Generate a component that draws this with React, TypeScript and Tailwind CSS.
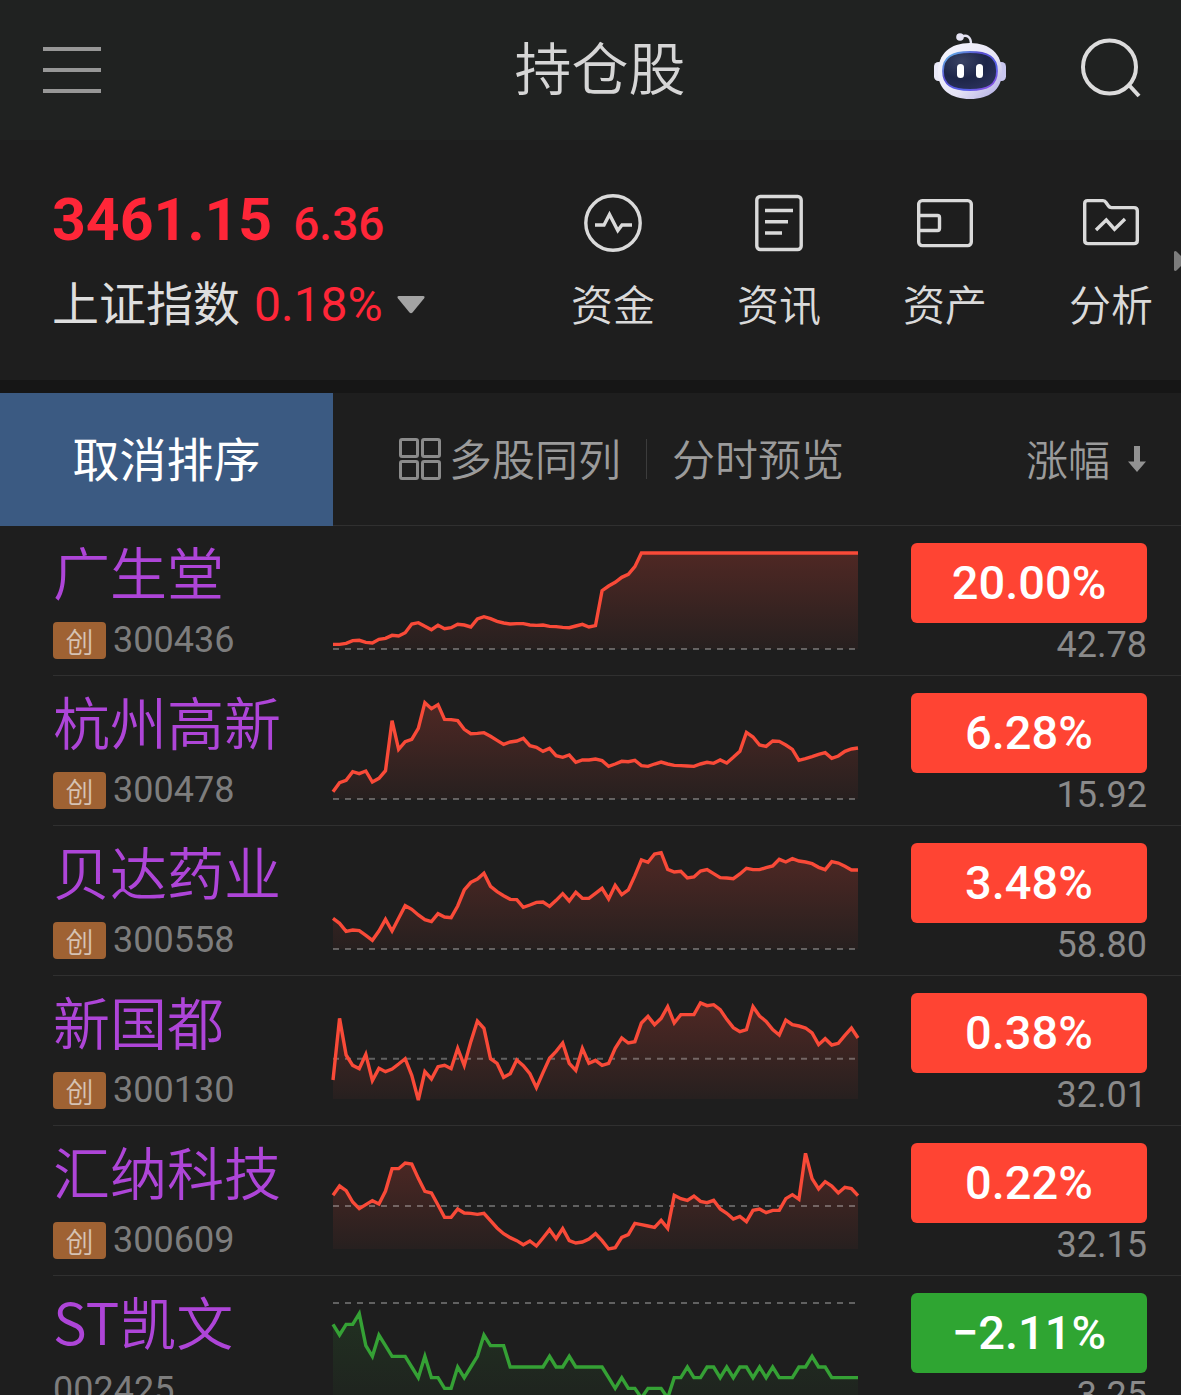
import { useId } from "react";
import type { ReactNode } from "react";

type Stock = {
  name: string;
  code: string;
  tag?: string;
  change: string;
  price: string;
  up: boolean;
  baseline: number;
  points: number[];
};

// Chart space is 1600 x 360, one sample every 20 units, y grows downwards
const CHART_WIDTH = 1600;
const CHART_HEIGHT = 360;
const CHART_FLOOR = 357;

const stocks: Stock[] = [
  {
    name: "广生堂", code: "300436", tag: "创", change: "20.00%", price: "42.78", up: true, baseline: 357,
    points: [
      343, 343, 340, 332, 331, 337, 339, 328, 325, 316, 318, 308, 282, 278, 289, 299, 286, 296, 293, 283, 285, 291, 267, 260, 266, 274, 279,
      282, 281, 281, 285, 286, 285, 289, 290, 292, 293, 288, 283, 291, 287, 182, 168, 157, 142, 133, 110, 69, 69, 69, 69, 69, 69, 69,
      69, 69, 69, 69, 69, 69, 69, 69, 69, 69, 69, 69, 69, 69, 69, 69, 69, 69, 69, 69, 69, 69, 69, 69, 69, 69, 69,
    ],
  },
  {
    name: "杭州高新", code: "300478", tag: "创", change: "6.28%", price: "15.92", up: true, baseline: 357,
    points: [
      335, 308, 301, 275, 281, 273, 306, 295, 272, 122, 208, 185, 178, 145, 68, 86, 74, 118, 119, 122, 148, 161, 160, 158, 169, 181, 193,
      186, 183, 175, 197, 202, 214, 205, 227, 232, 225, 247, 240, 240, 237, 242, 259, 252, 244, 245, 241, 257, 259, 252, 246, 252, 256, 257,
      258, 259, 252, 247, 250, 240, 249, 232, 214, 157, 171, 195, 199, 183, 184, 195, 208, 241, 236, 230, 223, 218, 235, 228, 214, 207, 204,
    ],
  },
  {
    name: "贝达药业", code: "300558", tag: "创", change: "3.48%", price: "58.80", up: true, baseline: 357,
    points: [
      265, 280, 304, 300, 302, 316, 331, 303, 268, 303, 265, 227, 238, 255, 269, 275, 251, 261, 263, 228, 180, 157, 147, 130, 169, 185, 197,
      208, 209, 232, 225, 217, 216, 229, 211, 191, 213, 187, 205, 205, 190, 175, 207, 166, 194, 180, 137, 90, 97, 72, 68, 118, 126, 124,
      144, 141, 123, 119, 131, 143, 144, 146, 132, 115, 119, 119, 113, 108, 88, 96, 86, 93, 96, 101, 112, 119, 95, 99, 109, 120, 120,
    ],
  },
  {
    name: "新国都", code: "300130", tag: "创", change: "0.38%", price: "32.01", up: true, baseline: 236,
    points: [
      300, 115, 225, 256, 266, 223, 302, 265, 275, 267, 252, 236, 286, 360, 275, 297, 260, 256, 266, 205, 256, 185, 123, 145, 236, 250, 292,
      281, 240, 257, 281, 323, 278, 235, 214, 189, 250, 271, 205, 250, 241, 256, 250, 205, 174, 189, 185, 129, 109, 134, 115, 80, 129, 104,
      104, 104, 69, 77, 74, 89, 118, 143, 155, 149, 80, 108, 124, 149, 165, 120, 134, 138, 144, 159, 194, 176, 195, 190, 166, 144, 174,
    ],
  },
  {
    name: "汇纳科技", code: "300609", tag: "创", change: "0.22%", price: "32.15", up: true, baseline: 228,
    points: [
      196, 168, 182, 216, 236, 224, 212, 222, 183, 116, 116, 99, 102, 145, 184, 189, 225, 262, 262, 237, 249, 250, 253, 250, 272, 294, 311,
      323, 332, 344, 333, 348, 324, 299, 326, 296, 332, 339, 336, 327, 311, 332, 357, 353, 322, 314, 280, 284, 288, 292, 271, 295, 196, 206,
      211, 198, 214, 218, 211, 237, 250, 267, 259, 275, 241, 237, 248, 241, 241, 206, 194, 208, 70, 146, 177, 155, 168, 189, 172, 176, 197,
    ],
  },
  {
    name: "ST凯文", code: "002425", change: "−2.11%", price: "3.25", up: false, baseline: 69,
    points: [
      133, 165, 133, 133, 101, 197, 229, 165, 197, 229, 229, 229, 261, 293, 229, 293, 293, 325, 325, 261, 293, 261, 229, 165, 197, 197, 197,
      261, 261, 261, 261, 261, 261, 229, 261, 261, 229, 261, 261, 261, 261, 261, 293, 325, 293, 325, 325, 354, 325, 325, 325, 354, 293, 293,
      261, 293, 293, 261, 261, 293, 261, 293, 261, 261, 293, 261, 293, 261, 293, 293, 293, 261, 261, 229, 261, 261, 293, 293, 293, 293, 293,
    ],
  },
];

function Sparkline({ points, baseline, up }: Pick<Stock, "points" | "baseline" | "up">) {
  const gradientId = useId();
  const color = up ? "#f94a38" : "#35a135";
  const line = points.map((y, i) => `${i * 20},${y}`).join(" ");

  return (
    <svg viewBox={`0 0 ${CHART_WIDTH} ${CHART_HEIGHT}`} preserveAspectRatio="none" className="block h-[120px] w-full overflow-visible" aria-hidden="true">
      <defs>
        <linearGradient id={gradientId} gradientUnits="userSpaceOnUse" x1="0" y1="60" x2="0" y2={CHART_FLOOR}>
          <stop offset="0" stopColor={color} stopOpacity={up ? 0.23 : 0.16} />
          <stop offset="1" stopColor={color} stopOpacity="0.04" />
        </linearGradient>
      </defs>
      <polygon points={`0,${CHART_FLOOR} ${line} ${CHART_WIDTH},${CHART_FLOOR}`} fill={`url(#${gradientId})`} />
      <line x1="0" y1={baseline} x2={CHART_WIDTH} y2={baseline} stroke="#fff" strokeOpacity="0.3" strokeWidth="2" strokeDasharray="6 6" vectorEffect="non-scaling-stroke" />
      <polyline points={line} fill="none" stroke={color} strokeWidth="3.4" vectorEffect="non-scaling-stroke" />
    </svg>
  );
}

function RobotIcon() {
  return (
    <svg width="76" height="70" viewBox="0 2 76 70" aria-hidden="true">
      <defs>
        <linearGradient id="robot-shell" x1="0" y1="0" x2="1" y2="1">
          <stop offset="0" stopColor="#f7f7fd" />
          <stop offset="0.6" stopColor="#e6e4f6" />
          <stop offset="1" stopColor="#aaa6e0" />
        </linearGradient>
        <linearGradient id="robot-rim" x1="0" y1="0" x2="1" y2="1">
          <stop offset="0" stopColor="#63c8ee" />
          <stop offset="0.35" stopColor="#5a4fd0" />
          <stop offset="0.7" stopColor="#5560ea" />
          <stop offset="1" stopColor="#a04be0" />
        </linearGradient>
        <radialGradient id="robot-face" cx="0.35" cy="0.25" r="0.9">
          <stop offset="0" stopColor="#3a4263" />
          <stop offset="0.5" stopColor="#1d2548" />
          <stop offset="1" stopColor="#2e3560" />
        </radialGradient>
      </defs>
      <path d="M29 6 C35 3 39 6 39 13" fill="none" stroke="#e4e3f2" strokeWidth="2.4" />
      <circle cx="28" cy="6" r="3.8" fill="#e6e5f5" />
      <rect x="2" y="31" width="9" height="19" rx="4.5" fill="#e9e9f8" />
      <rect x="65" y="31" width="9" height="19" rx="4.5" fill="#c9c7ef" />
      <path d="M38 12 C58 12 70 23 70 41 C70 59 57 68 38 68 C19 68 6 59 6 41 C6 23 18 12 38 12 Z" fill="url(#robot-shell)" />
      <path d="M38 21 C56 21 65 26 65 40 C65 54 56 59 38 59 C20 59 11 54 11 40 C11 26 20 21 38 21 Z" fill="url(#robot-face)" stroke="url(#robot-rim)" strokeWidth="1.8" />
      <rect x="25" y="33" width="7" height="14" rx="3.5" fill="#fff" />
      <rect x="44" y="33" width="7" height="14" rx="3.5" fill="#fff" />
    </svg>
  );
}

function ShortcutIcon({ children }: { children: ReactNode }) {
  return (
    <svg width="60" height="60" viewBox="0 0 60 60" fill="none" stroke="#dadada" strokeWidth="3.4" strokeLinejoin="round" aria-hidden="true">
      {children}
    </svg>
  );
}

const shortcuts = [
  {
    label: "资金",
    icon: (
      <>
        <circle cx="30" cy="30" r="27.2" />
        <path d="M12 32 H21 L26.5 21.5 L34.8 37.5 L39 32 H49" strokeLinejoin="miter" />
      </>
    ),
  },
  {
    label: "资讯",
    icon: (
      <>
        <rect x="7.8" y="3.5" width="44.4" height="53" rx="3.5" />
        <path d="M16 17.5 H44 M16 28.8 H39 M16 40 H33" />
      </>
    ),
  },
  {
    label: "资产",
    icon: (
      <>
        <rect x="3.7" y="7.6" width="52.6" height="45" rx="3.5" />
        <path d="M3.7 22.5 H22.5 Q24.5 22.5 24.5 24.5 V35.5 Q24.5 37.5 22.5 37.5 H3.7" />
      </>
    ),
  },
  {
    label: "分析",
    icon: (
      <>
        <path d="M6.5 7.6 H22 Q24 7.6 25 9.6 L27.5 13 Q28.5 14.6 30.5 14.6 H53 Q56.3 14.6 56.3 17.8 V47.5 Q56.3 50.6 53 50.6 H7 Q3.7 50.6 3.7 47.5 V10.5 Q3.7 7.6 6.5 7.6 Z" />
        <path d="M15 37 L25.3 27 L33.5 36.2 L44 26" strokeLinejoin="miter" />
      </>
    ),
  },
];

function TopBar() {
  return (
    <header className="grid h-[140px] grid-cols-[1fr_auto_1fr] items-center bg-[#202221] pr-6 pl-[43px]">
      <button type="button" aria-label="菜单" className="flex w-[58px] flex-col gap-[17px]">
        <span className="h-1 w-full bg-[#979797]" />
        <span className="h-1 w-full bg-[#979797]" />
        <span className="h-1 w-full bg-[#979797]" />
      </button>
      <h1 className="pb-[10px] text-[57px] leading-[64px] font-[350] text-[#d6d6d6]">持仓股</h1>
      <div className="flex items-center justify-end gap-[57px] pb-1">
        <button type="button" aria-label="智能助手">
          <RobotIcon />
        </button>
        <button type="button" aria-label="搜索" className="p-4">
          <svg width="60" height="60" viewBox="0 0 60 60" fill="none" stroke="#dcdcdc" strokeWidth="4" aria-hidden="true">
            <circle cx="28.5" cy="29" r="26.5" />
            <path d="M47 46 L58 58" />
          </svg>
        </button>
      </div>
    </header>
  );
}

function IndexPanel() {
  return (
    <section className="relative flex h-[240px] overflow-hidden">
      <div className="w-[530px] shrink-0 pt-[44px] pl-[52px] font-[Roboto,'Noto_Sans_CJK_SC',sans-serif] text-[#ff2638]">
        <div className="flex items-baseline gap-[21px] leading-[72px]">
          <span className="text-[59px] font-bold">3461.15</span>
          <span className="text-[46px] font-medium">6.36</span>
        </div>
        <button type="button" className="mt-[13px] flex items-center gap-[14px] leading-[64px]">
          <span className="text-[47px] text-[#dedede]">上证指数</span>
          <span className="text-[48px]">0.18%</span>
          <svg width="28" height="18" viewBox="0 0 28 18" aria-hidden="true">
            <path d="M2 0 H26 Q28.5 0 27 2.5 L15.5 16.5 Q14 18 12.5 16.5 L1 2.5 Q-0.5 0 2 0 Z" fill="#a3a3a3" />
          </svg>
        </button>
      </div>
      <nav className="flex pt-[53px]">
        {shortcuts.map(({ label, icon }) => (
          <a key={label} href="#" className="flex w-[166px] shrink-0 flex-col items-center gap-5">
            <ShortcutIcon>{icon}</ShortcutIcon>
            <span className="text-[42px] leading-[60px] font-[350] text-[#dadada]">{label}</span>
          </a>
        ))}
      </nav>
      {/* hint that the shortcut strip scrolls */}
      <svg width="7" height="20" viewBox="0 0 7 20" className="absolute top-[111px] right-0" aria-hidden="true">
        <path d="M0 1 Q1 -1 3 1 L7 5 V15 L3 19 Q1 21 0 19 Z" fill="#7c7c7c" />
      </svg>
    </section>
  );
}

function StockTable() {
  return (
    <table className="w-full table-fixed border-collapse">
      <colgroup>
        <col className="w-[333px]" />
        <col />
        <col className="w-[323px]" />
      </colgroup>
      <thead>
        <tr className="text-[43px] text-[#9b9b9b]">
          <th className="p-0 font-normal">
            <button type="button" className="h-[133px] w-full bg-[#3b5a82] pb-1 text-[47px] text-white">
              取消排序
            </button>
          </th>
          <th className="p-0 font-[350]">
            <div className="flex h-[133px] items-center border-b border-[#303030] pl-[66px] whitespace-nowrap">
              <button type="button" className="flex items-center gap-2">
                <svg width="42" height="42" viewBox="0 0 42 42" fill="none" stroke="#8b8b8b" strokeWidth="3" aria-hidden="true">
                  <rect x="1.5" y="1.5" width="17" height="17" rx="1.5" />
                  <rect x="23.5" y="1.5" width="17" height="17" rx="1.5" />
                  <rect x="1.5" y="23.5" width="17" height="17" rx="1.5" />
                  <rect x="23.5" y="23.5" width="17" height="17" rx="1.5" />
                </svg>
                <span className="pb-1">多股同列</span>
              </button>
              <span className="mx-[25px] h-10 w-px bg-[#3c3c3c]" />
              <button type="button" className="pb-1">分时预览</button>
            </div>
          </th>
          <th className="p-0 font-[350]">
            <div className="flex h-[133px] items-center justify-end border-b border-[#303030] pr-[34px]">
              <button type="button" className="flex items-center gap-[17px] text-[42px]">
                <span className="pb-1">涨幅</span>
                <svg width="20" height="26" viewBox="0 0 20 26" fill="#929292" aria-hidden="true">
                  <path d="M7 0 H13 V15.5 H19 L10 26 L1 15.5 H7 Z" />
                </svg>
              </button>
            </div>
          </th>
        </tr>
      </thead>
      <tbody>
        {stocks.map((stock) => (
          <tr key={stock.code}>
            <th scope="row" className="p-0 text-left font-normal">
              <div className="ml-[53px] h-[150px] border-b border-[#303030] pt-3">
                <div className="text-[57px] leading-[64px] font-[350] whitespace-nowrap text-[#ae45d8]">{stock.name}</div>
                <div className="mt-5 flex h-[37px] items-center gap-[7px]">
                  {stock.tag && (
                    <span className="flex h-[37px] w-[53px] items-center justify-center rounded-[4px] bg-[#9f6233] text-[28px] leading-[36px] font-[350] text-[#d6c3b3]">
                      {stock.tag}
                    </span>
                  )}
                  <span className="font-[Roboto,sans-serif] text-[36px] leading-[37px] text-[#7d7d7d]">{stock.code}</span>
                </div>
              </div>
            </th>
            <td className="p-0">
              <div className="h-[150px] border-b border-[#303030] pt-1">
                <Sparkline points={stock.points} baseline={stock.baseline} up={stock.up} />
              </div>
            </td>
            <td className="p-0">
              <div className="h-[150px] border-b border-[#303030] pt-[17px] pr-[34px] pl-[53px] font-[Roboto,sans-serif]">
                <div className={`flex h-20 items-center justify-center rounded-md text-[47px] font-medium text-white ${stock.up ? "bg-[#ff4433]" : "bg-[#2fa532]"}`}>
                  {stock.change}
                </div>
                <div className="text-right text-[36px] leading-[44px] text-[#8a8a8a]">{stock.price}</div>
              </div>
            </td>
          </tr>
        ))}
      </tbody>
    </table>
  );
}

export default function App() {
  return (
    <main className="h-screen overflow-hidden bg-[#1e1e1e] font-['Noto_Sans_CJK_SC',sans-serif]">
      <TopBar />
      <IndexPanel />
      <div className="h-[13px] bg-[#161616]" />
      <StockTable />
    </main>
  );
}
